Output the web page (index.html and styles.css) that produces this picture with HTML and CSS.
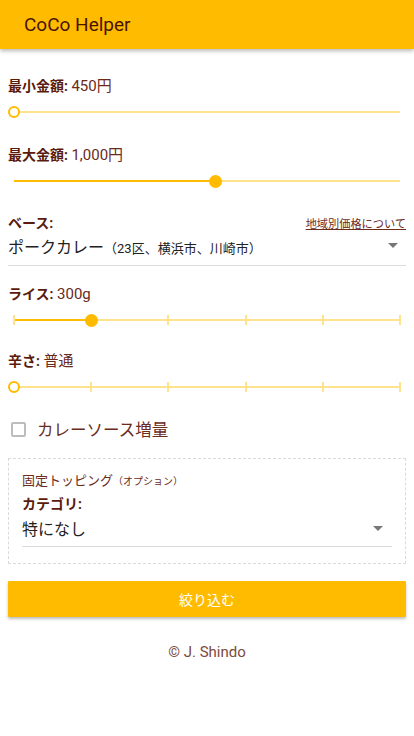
FILE: index.html
```html
<!DOCTYPE html>
<html lang="ja">
<head>
<meta charset="utf-8">
<title>CoCo Helper</title>
<link rel="stylesheet" href="styles.css">
</head>
<body>
<header class="appbar"><h1 class="title">CoCo Helper</h1></header>
<main class="content">
  <section class="field">
    <div class="label"><b>最小金額:</b> <span class="val">450円</span></div>
    <div class="slider">
      <div class="track"><div class="active" style="width:0%"></div></div>
      <span class="thumb hollow" style="left:0%"></span>
    </div>
  </section>
  <section class="field">
    <div class="label"><b>最大金額:</b> <span class="val">1,000円</span></div>
    <div class="slider">
      <div class="track"><div class="active" style="width:52.3%"></div></div>
      <span class="thumb" style="left:52.3%"></span>
    </div>
  </section>
  <section class="field base">
    <div class="label-row"><b class="lbl">ベース:</b><a class="link" href="#">地域別価格について</a></div>
    <div class="select"><span class="sel-text">ポークカレー<small>（23区、横浜市、川崎市）</small></span><span class="caret"></span></div>
  </section>
  <section class="field rice">
    <div class="label"><b>ライス:</b> <span class="val">300g</span></div>
    <div class="slider">
      <div class="track"><div class="active" style="width:20%"></div>
        <div class="ticks"><i></i><i></i><i></i><i></i><i></i><i></i></div>
      </div>
      <span class="thumb" style="left:20%"></span>
    </div>
  </section>
  <section class="field">
    <div class="label"><b>辛さ:</b> <span class="val">普通</span></div>
    <div class="slider">
      <div class="track"><div class="active" style="width:0%"></div>
        <div class="ticks"><i></i><i></i><i></i><i></i><i></i><i></i></div>
      </div>
      <span class="thumb hollow" style="left:0%"></span>
    </div>
  </section>
  <label class="check"><span class="box"></span><span class="check-text">カレーソース増量</span></label>
  <fieldset class="topping">
    <div class="topping-title">固定トッピング<small>（オプション）</small></div>
    <div class="lbl">カテゴリ:</div>
    <div class="select inner"><span class="sel-text">特になし</span><span class="caret"></span></div>
  </fieldset>
  <button class="submit" type="button">絞り込む</button>
  <footer class="footer">© J. Shindo</footer>
</main>
</body>
</html>
```
FILE: styles.css
```css
* { box-sizing: border-box; }
html, body { margin: 0; padding: 0; background: #fff; }
body {
  font-family: Roboto, "Noto Sans CJK JP", sans-serif;
  color: #5e1f10;
  width: 414px;
}
.appbar {
  height: 49px;
  background: #ffbb00;
  display: flex;
  align-items: center;
  padding-left: 24px;
  box-shadow: 0 2px 4px rgba(0,0,0,0.28);
  position: relative;
}
.title {
  margin: 0;
  font-size: 19px;
  font-weight: 400;
  color: #4a1400;
}
.content {
  padding: 27px 8px 0;
  display: flex;
  flex-direction: column;
}
.field { display: flex; flex-direction: column; margin-bottom: 23px; }
.label { height: 20px; line-height: 20px; font-size: 14px; }
.label b { font-weight: 700; color: #5a1a0c; }
.val { font-size: 15px; color: #6a2a1c; }
.slider {
  position: relative;
  height: 20px;
  margin: 6px 6px 0;
  display: flex;
  align-items: center;
}
.track {
  position: relative;
  flex: 1;
  height: 2px;
  background: #ffe38a;
}
.active { height: 2px; background: #ffbb00; }
.ticks {
  position: absolute;
  left: -1px; right: -1px; top: -4px;
  height: 10px;
  display: flex;
  justify-content: space-between;
}
.ticks i { width: 2px; height: 10px; background: #ffe38a; display: block; }
.thumb {
  position: absolute;
  top: 50%;
  width: 13px; height: 13px;
  margin: -6.5px 0 0 -6.5px;
  border-radius: 50%;
  background: #ffbb00;
}
.thumb.hollow { width: 12px; height: 12px; margin: -6px 0 0 -6px; background: #fff; border: 2px solid #ffbb00; }
.base { margin-bottom: 18px; margin-top: -1px; }
.label-row {
  display: flex;
  justify-content: space-between;
  align-items: baseline;
  height: 20px;
  line-height: 20px;
}
.lbl { font-size: 14px; font-weight: 700; color: #5a1a0c; }
.link { font-size: 11.2px; color: #6d2b1d; text-decoration: underline; }
.select {
  height: 33px;
  display: flex;
  align-items: center;
  justify-content: space-between;
  border-bottom: 1px solid #dcdcdc;
  padding-bottom: 7px;
  padding-right: 8px;
}
.sel-text { font-size: 16px; color: #222; }
.sel-text small { font-size: 13px; }
.caret {
  width: 0; height: 0;
  border-left: 5px solid transparent;
  border-right: 5px solid transparent;
  border-top: 5px solid #777;
}
.rice { margin-bottom: 21px; }
.check {
  display: flex;
  align-items: center;
  height: 20px;
  margin: -1px 0 19px 3px;
}
.box {
  width: 15px; height: 15px;
  border: 2px solid #bdbdbd;
  border-radius: 2px;
  margin-right: 11px;
}
.check-text { font-size: 16.5px; color: #6b2c1e; }
.topping {
  margin: 0;
  border: 1px dashed #dadada;
  height: 106px;
  padding: 12px 13px 0;
  display: flex;
  flex-direction: column;
}
.topping-title { font-size: 13px; color: #6b2c1e; height: 20px; line-height: 20px; }
.topping-title small { font-size: 10px; }
.topping .lbl { height: 22px; line-height: 26px; }
.select.inner { height: 34px; padding-top: 4px; padding-right: 9px; }
.submit {
  margin-top: 17px;
  height: 36px;
  border: none;
  background: #ffbb00;
  color: #fff;
  font-family: Roboto, "Noto Sans CJK JP", sans-serif;
  font-size: 14px;
  box-shadow: 0 2px 3px rgba(0,0,0,0.25);
  border-radius: 1px;
}
.footer {
  text-align: center;
  font-size: 15px;
  color: #7d4a3e;
  margin-top: 25px;
  line-height: 20px;
}
```
